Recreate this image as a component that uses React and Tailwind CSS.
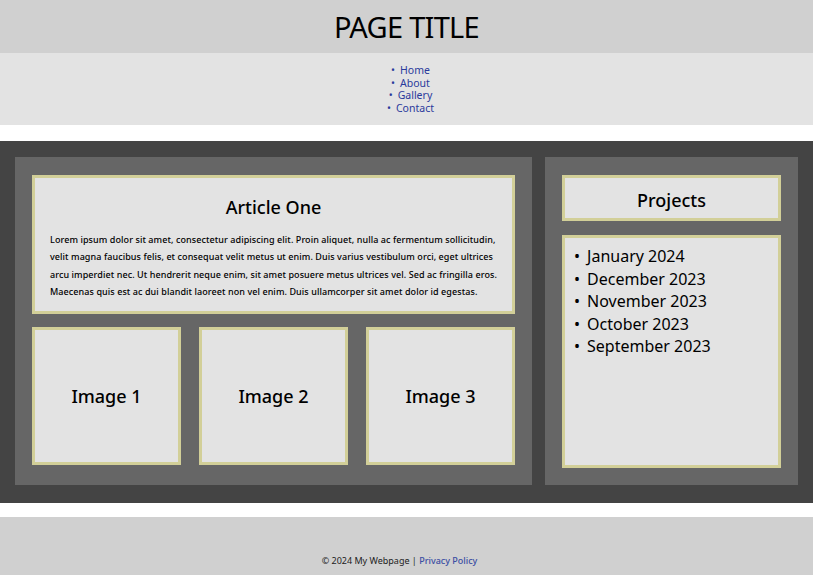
const navLinks = ['Home', 'About', 'Gallery', 'Contact']
const months = ['January 2024', 'December 2023', 'November 2023', 'October 2023', 'September 2023']

const Box = ({ className = '', children }) => (
  <div className={`border-[3px] border-[#d2cf98] bg-[#e3e3e3] ${className}`}>{children}</div>
)

export default function App() {
  return (
    <div className="min-h-[575px] bg-white font-['Noto_Sans',sans-serif] text-black">
      {/* header */}
      <header className="flex h-[53px] items-center justify-center bg-[#d0d0d0]">
        <h1 className="text-[29px] leading-none tracking-tight">PAGE TITLE</h1>
      </header>

      {/* nav */}
      <nav className="flex h-[72px] justify-center bg-[#e3e3e3] pl-[8px] pt-[11px]">
        <ul className="text-[10.5px] leading-[12.5px]">
          {navLinks.map((link) => (
            <li key={link} className="flex h-[12.5px] items-center justify-center gap-[5px]">
              <span className="text-[#2a3a9c]">•</span>
              <a href="#" className="text-[#2a3a9c]">{link}</a>
            </li>
          ))}
        </ul>
      </nav>

      <main className="mt-4 flex h-[362px] gap-[13px] bg-[#444444] px-[15px] pb-[18px] pt-4">
        {/* left column */}
        <section className="flex w-[517px] flex-col gap-[13px] bg-[#666666] px-[17px] pt-[18px]">
          <Box className="h-[139px] px-[15px] pt-[20px]">
            <h2 className="text-center text-[18px] font-medium leading-none">Article One</h2>
            <p className="mt-[15px] whitespace-nowrap text-[9px] font-medium leading-[17.3px] tracking-[0.08px]">
              Lorem ipsum dolor sit amet, consectetur adipiscing elit. Proin aliquet, nulla ac fermentum sollicitudin,
              <br />
              velit magna faucibus felis, et consequat velit metus ut enim. Duis varius vestibulum orci, eget ultrices
              <br />
              arcu imperdiet nec. Ut hendrerit neque enim, sit amet posuere metus ultrices vel. Sed ac fringilla eros.
              <br />
              Maecenas quis est ac dui blandit laoreet non vel enim. Duis ullamcorper sit amet dolor id egestas.
            </p>
          </Box>
          <div className="flex gap-[18px]">
            {[1, 2, 3].map((n) => (
              <Box key={n} className="flex h-[138px] w-[149px] items-center justify-center">
                <span className="text-[18px] font-medium">Image {n}</span>
              </Box>
            ))}
          </div>
        </section>

        {/* right column */}
        <aside className="flex flex-1 flex-col gap-[14px] bg-[#666666] px-[17px] pb-[17px] pt-[18px]">
          <Box className="flex h-[46px] items-center justify-center pt-[5px]">
            <h2 className="text-[18px] font-medium">Projects</h2>
          </Box>
          <Box className="flex-1 pl-[9px] pt-[7px]">
            <ul className="text-[16px] leading-[22.5px]">
              {months.map((m) => (
                <li key={m} className="flex gap-[7px]">
                  <span>•</span>
                  <span>{m}</span>
                </li>
              ))}
            </ul>
          </Box>
        </aside>
      </main>

      <footer className="mt-[14px] flex h-[58px] items-end justify-center bg-[#d0d0d0] pb-[8px] text-[9px]">
        <p className="mr-[14px] text-[#222]">
          © 2024 My Webpage | <a href="#" className="font-medium text-[#3b4ea3]">Privacy Policy</a>
        </p>
      </footer>
    </div>
  )
}
